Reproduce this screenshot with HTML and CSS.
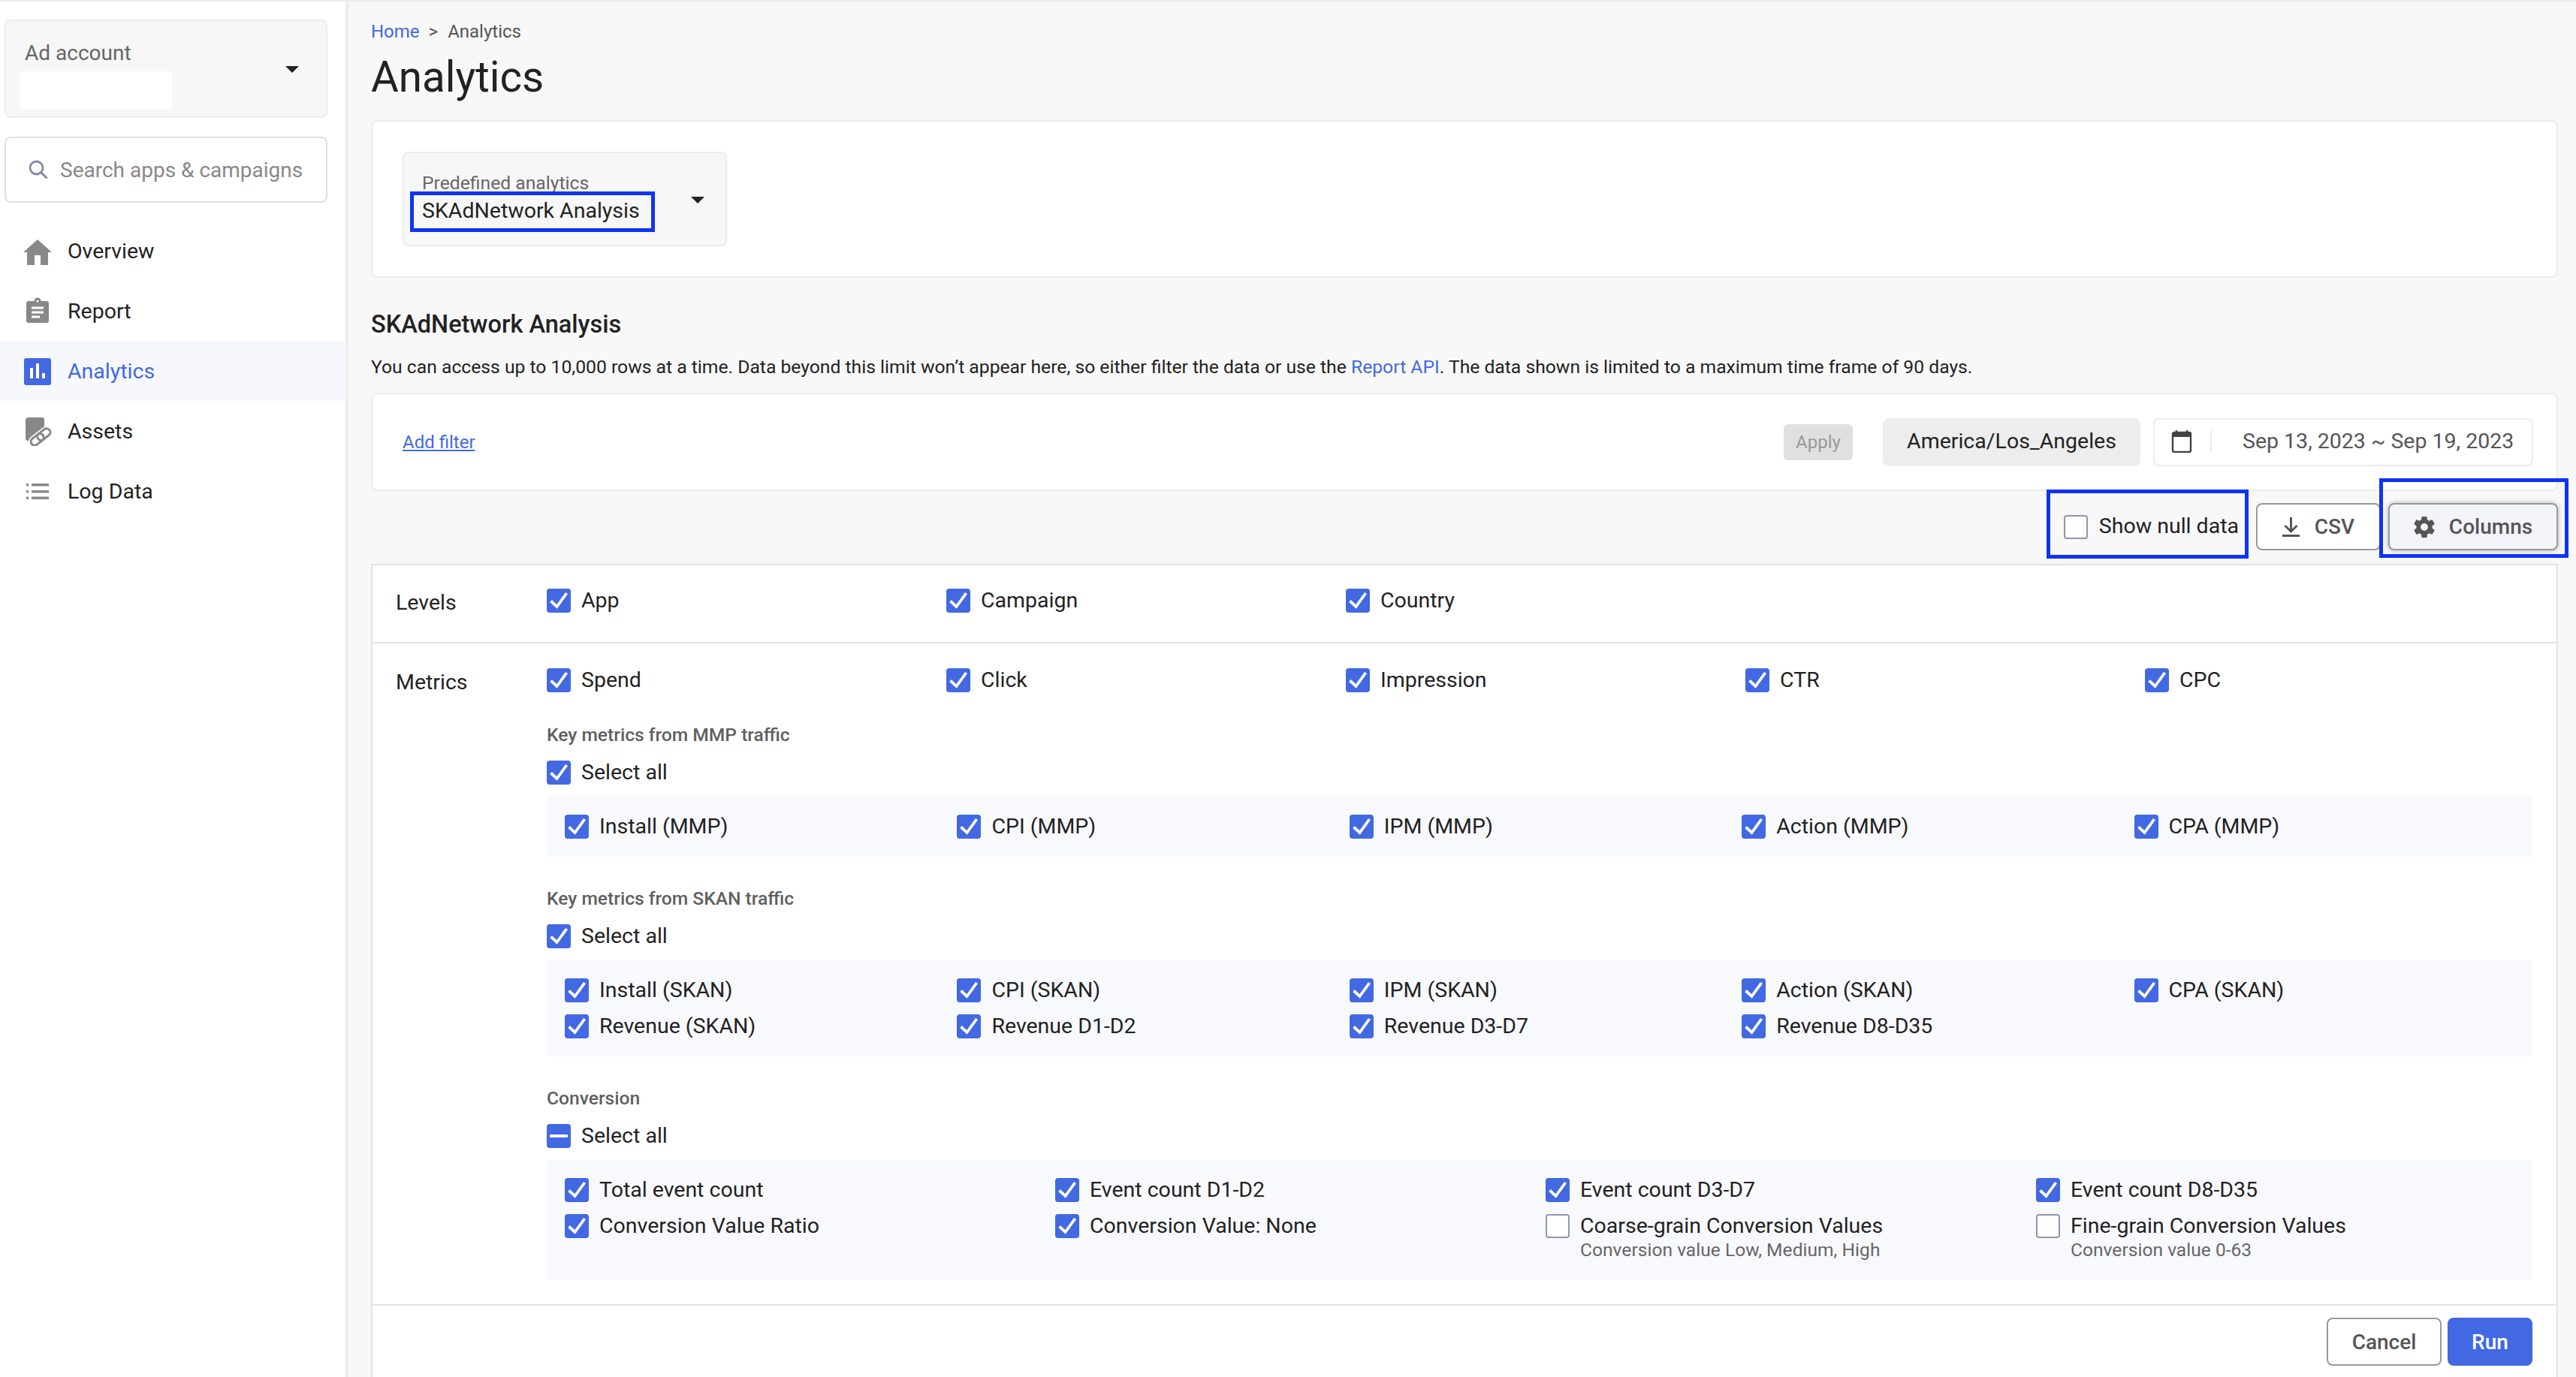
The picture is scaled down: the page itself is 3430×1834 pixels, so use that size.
FILE: index.html
```html
<!DOCTYPE html>
<html lang="en">
<head>
    <meta charset="UTF-8">
    <title>Analytics</title>
    <link rel="stylesheet" href="styles.css">
</head>
<body>
    <svg class="defs" width="0" height="0">
        <symbol id="tick" viewBox="0 0 32 32"><path d="M5.500 16.500L13.500 24L26.500 6" fill="none" stroke="#fff" stroke-width="3.800"/></symbol>
    </svg>
    <div class="page">
        <aside class="sidebar">
            <div class="account">
                <div class="account-text">
                    <div class="account-label">Ad account</div>
                    <div class="account-value"></div>
                </div>
                <span class="caret"></span>
            </div>
            <div class="search">
                <svg class="search-icon" viewBox="0 0 26 26"><circle cx="10.500" cy="10.500" r="8.500" fill="none" stroke="#7f8ba8" stroke-width="2.800"/><path d="M16.500 16.500l8 8" stroke="#7f8ba8" stroke-width="3"/></svg>
                <span>Search apps &amp; campaigns</span>
            </div>
            <nav class="menu">
                <a class="menu-item">
                    <svg class="menu-icon" viewBox="0 0 40 40"><path d="M20 5L1 22h5v17h10V26h8v13h10V22h5z" fill="#888"/></svg>
                    Overview
                </a>
                <a class="menu-item">
                    <svg class="menu-icon" viewBox="0 0 40 40"><rect x="5" y="7" width="30" height="29" rx="3" fill="#888"/><circle cx="20" cy="7" r="4.500" fill="#888"/><circle cx="20" cy="7" r="1.500" fill="#fff"/><path d="M12 16h16M12 22h16M12 28h11" stroke="#fff" stroke-width="3"/></svg>
                    Report
                </a>
                <a class="menu-item active">
                    <svg class="menu-icon" viewBox="0 0 40 40"><rect x="2" y="3" width="36" height="36" rx="3" fill="#4269e2"/><path d="M10 16h4v14h-4zM18 10h4v20h-4zM26 23h4v7h-4z" fill="#fff"/></svg>
                    Analytics
                </a>
                <a class="menu-item">
                    <svg class="menu-icon" viewBox="0 0 40 40">
                        <path d="M8 2h18a3 3 0 0 1 3 3v28H7a3 3 0 0 1-3-3V6a4 4 0 0 1 4-4z" fill="#888"/>
                        <g transform="rotate(-38 24 28)">
                            <rect x="6" y="20" width="36" height="16" rx="8" fill="#fff"/>
                            <rect x="9" y="23" width="19" height="10" rx="5" fill="none" stroke="#888" stroke-width="3"/>
                            <rect x="20" y="23" width="19" height="10" rx="5" fill="none" stroke="#888" stroke-width="3"/>
                        </g>
                    </svg>
                    Assets
                </a>
                <a class="menu-item">
                    <svg class="menu-icon" viewBox="0 0 40 40"><path d="M12 10h23v3.500H12zM12 19h23v3.500H12zM12 27.500h23V31H12zM5 10h3v3.500H5zM5 19h3v3.500H5zM5 27.500h3V31H5z" fill="#888"/></svg>
                    Log Data
                </a>
            </nav>
        </aside>

        <main class="main">
            <div class="breadcrumb"><a class="link">Home</a><span class="crumb-sep">&gt;</span>Analytics</div>
            <h1 class="title">Analytics</h1>

            <section class="card select-card">
                <div class="select">
                    <div class="select-label">Predefined analytics</div>
                    <div class="select-value">SKAdNetwork Analysis</div>
                    <span class="caret small"></span>
                    <span class="mark mark-select"></span>
                </div>
            </section>

            <h2 class="heading">SKAdNetwork Analysis</h2>
            <p class="note">You can access up to 10,000 rows at a time. Data beyond this limit won’t appear here, so either filter the data or use the <a class="link">Report API</a>. The data shown is limited to a maximum time frame of 90 days.</p>

            <section class="card filter-card">
                <a class="link add-filter">Add filter</a>
                <button class="apply">Apply</button>
                <div class="timezone">America/Los_Angeles</div>
                <div class="dates">
                    <svg class="calendar" viewBox="0 0 28 30"><path d="M7 0v4M21 0v4" stroke="#444" stroke-width="2.400"/><rect x="2" y="3" width="24" height="26" rx="2" fill="#fff" stroke="#444" stroke-width="2.400"/><rect x="2" y="3" width="24" height="6" fill="#444"/></svg>
                    <span class="dates-sep"></span>
                    <span>Sep 13, 2023 ~ Sep 19, 2023</span>
                </div>
            </section>

            <div class="toolbar">
                <label class="null-toggle"><span class="box"></span><span class="null-text">Show null data</span></label>
                <button class="tool-btn csv">
                    <svg class="csv-icon" viewBox="0 0 23 26"><path d="M11.500 0v18M3.500 11l8 8 8-8M0 24.500h23" fill="none" stroke="#555" stroke-width="3"/></svg>
                    CSV
                </button>
                <button class="tool-btn columns">
                    <svg class="gear-icon" viewBox="2 2 20 20"><path fill="#555" d="M19.430 12.980c.04-.32.07-.64.07-.98s-.03-.66-.07-.98l2.110-1.650c.19-.15.24-.42.12-.64l-2-3.460c-.12-.22-.39-.3-.61-.22l-2.490 1c-.52-.4-1.080-.73-1.690-.98l-.38-2.650C14.460 2.180 14.250 2 14 2h-4c-.25 0-.46.18-.49.42l-.38 2.650c-.61.25-1.170.59-1.690.98l-2.490-1c-.23-.09-.49 0-.61.22l-2 3.460c-.13.22-.07.49.12.64l2.110 1.650c-.04.32-.07.65-.07.98s.03.66.07.98l-2.110 1.650c-.19.15-.24.42-.12.64l2 3.460c.12.22.39.3.61.22l2.490-1c.52.4 1.080.73 1.690.98l.38 2.650c.03.24.24.42.49.42h4c.25 0 .46-.18.49-.42l.38-2.650c.61-.25 1.170-.59 1.690-.98l2.490 1c.23.09.49 0 .61-.22l2-3.460c.12-.22.07-.49-.12-.64l-2.110-1.650zM12 15.500c-1.930 0-3.500-1.570-3.500-3.500s1.570-3.500 3.500-3.500 3.500 1.570 3.500 3.500-1.570 3.500-3.500 3.500z"/></svg>
                    Columns
                </button>
                <span class="mark mark-null"></span>
                <span class="mark mark-columns"></span>
            </div>

            <section class="table">
                <div class="table-row levels">
                    <div class="row-label">Levels</div>
                    <div class="row-body top-grid">
                        <label class="opt"><span class="box on"><svg><use href="#tick"/></svg></span>App</label>
                        <label class="opt"><span class="box on"><svg><use href="#tick"/></svg></span>Campaign</label>
                        <label class="opt"><span class="box on"><svg><use href="#tick"/></svg></span>Country</label>
                    </div>
                </div>
                <div class="table-row metrics">
                    <div class="row-label">Metrics</div>
                    <div class="row-body">
                        <div class="top-grid">
                            <label class="opt"><span class="box on"><svg><use href="#tick"/></svg></span>Spend</label>
                            <label class="opt"><span class="box on"><svg><use href="#tick"/></svg></span>Click</label>
                            <label class="opt"><span class="box on"><svg><use href="#tick"/></svg></span>Impression</label>
                            <label class="opt"><span class="box on"><svg><use href="#tick"/></svg></span>CTR</label>
                            <label class="opt"><span class="box on"><svg><use href="#tick"/></svg></span>CPC</label>
                        </div>

                        <div class="group-title first">Key metrics from MMP traffic</div>
                        <label class="opt select-all"><span class="box on"><svg><use href="#tick"/></svg></span>Select all</label>
                        <div class="panel five">
                            <label class="opt"><span class="box on"><svg><use href="#tick"/></svg></span>Install (MMP)</label>
                            <label class="opt"><span class="box on"><svg><use href="#tick"/></svg></span>CPI (MMP)</label>
                            <label class="opt"><span class="box on"><svg><use href="#tick"/></svg></span>IPM (MMP)</label>
                            <label class="opt"><span class="box on"><svg><use href="#tick"/></svg></span>Action (MMP)</label>
                            <label class="opt"><span class="box on"><svg><use href="#tick"/></svg></span>CPA (MMP)</label>
                        </div>

                        <div class="group-title">Key metrics from SKAN traffic</div>
                        <label class="opt select-all"><span class="box on"><svg><use href="#tick"/></svg></span>Select all</label>
                        <div class="panel five">
                            <label class="opt"><span class="box on"><svg><use href="#tick"/></svg></span>Install (SKAN)</label>
                            <label class="opt"><span class="box on"><svg><use href="#tick"/></svg></span>CPI (SKAN)</label>
                            <label class="opt"><span class="box on"><svg><use href="#tick"/></svg></span>IPM (SKAN)</label>
                            <label class="opt"><span class="box on"><svg><use href="#tick"/></svg></span>Action (SKAN)</label>
                            <label class="opt"><span class="box on"><svg><use href="#tick"/></svg></span>CPA (SKAN)</label>
                            <label class="opt"><span class="box on"><svg><use href="#tick"/></svg></span>Revenue (SKAN)</label>
                            <label class="opt"><span class="box on"><svg><use href="#tick"/></svg></span>Revenue D1-D2</label>
                            <label class="opt"><span class="box on"><svg><use href="#tick"/></svg></span>Revenue D3-D7</label>
                            <label class="opt"><span class="box on"><svg><use href="#tick"/></svg></span>Revenue D8-D35</label>
                        </div>

                        <div class="group-title">Conversion</div>
                        <label class="opt select-all"><span class="box on dash"></span>Select all</label>
                        <div class="panel four">
                            <label class="opt"><span class="box on"><svg><use href="#tick"/></svg></span>Total event count</label>
                            <label class="opt"><span class="box on"><svg><use href="#tick"/></svg></span>Event count D1-D2</label>
                            <label class="opt"><span class="box on"><svg><use href="#tick"/></svg></span>Event count D3-D7</label>
                            <label class="opt"><span class="box on"><svg><use href="#tick"/></svg></span>Event count D8-D35</label>
                            <label class="opt"><span class="box on"><svg><use href="#tick"/></svg></span>Conversion Value Ratio</label>
                            <label class="opt"><span class="box on"><svg><use href="#tick"/></svg></span>Conversion Value: None</label>
                            <label class="opt"><span class="box"></span><span>Coarse-grain Conversion Values<small class="hint">Conversion value Low, Medium, High</small></span></label>
                            <label class="opt"><span class="box"></span><span>Fine-grain Conversion Values<small class="hint">Conversion value 0-63</small></span></label>
                        </div>
                    </div>
                </div>
                <div class="table-foot">
                    <button class="cancel">Cancel</button>
                    <button class="run">Run</button>
                </div>
            </section>
        </main>
    </div>
</body>
</html>
```

FILE: styles.css
```css
* {
    margin: 0;
    padding: 0;
    box-sizing: border-box;
}
html, body {
    height: 1834px;
    overflow: hidden;
}
body {
    font-family: "Roboto", "Liberation Sans", sans-serif;
    font-size: 28.5px;
    color: #222;
    background-color: #f8f8f8;
}
button {
    font-family: inherit;
}
.defs {
    position: absolute;
}
.page {
    display: flex;
    height: 1834px;
    border-top: 2px solid #ececec;
}
.link {
    color: #4269e2;
}

/* sidebar */
.sidebar {
    width: 464px;
    flex-shrink: 0;
    background-color: #fff;
    border-right: 4px solid #ededed;
    padding-top: 24px;
}
.account {
    display: flex;
    justify-content: space-between;
    align-items: center;
    width: 430px;
    height: 131px;
    margin-left: 6px;
    padding: 2px 36px 0 18px;
    background-color: #f7f7f7;
    border: 2px solid #ececec;
    border-radius: 8px;
}
.account-label {
    color: #666;
    font-size: 28px;
    margin: 14px 0 7px 7px;
    line-height: 34px;
}
.account-value {
    width: 203px;
    height: 51px;
    background-color: #fff;
}
.caret {
    border-left: 9px solid transparent;
    border-right: 9px solid transparent;
    border-top: 9px solid #222;
}
.search {
    display: flex;
    align-items: center;
    width: 430px;
    height: 88px;
    margin: 25px 0 24px 6px;
    padding-left: 30px;
    color: #888;
    font-size: 28px;
    border: 2px solid #dedede;
    border-radius: 8px;
}
.search-icon {
    width: 26px;
    height: 26px;
    margin-right: 16px;
}
.menu-item {
    display: flex;
    align-items: center;
    height: 80px;
    padding-left: 30px;
}
.menu-item.active {
    color: #4269e2;
    background-color: #f7f8fd;
}
.menu-icon {
    width: 40px;
    height: 40px;
    margin-right: 20px;
}

/* main column */
.main {
    flex: 1;
    padding: 0 24px 0 30px;
    min-width: 0;
}
.breadcrumb {
    font-size: 24px;
    line-height: 32px;
    color: #555;
    margin-top: 24px;
}
.crumb-sep {
    margin: 0 13px 0 12px;
}
.title {
    font-size: 56.500px;
    font-weight: 400;
    line-height: 72px;
    margin-top: 9px;
}
.card {
    background-color: #fff;
    border: 2px solid #ececec;
    border-radius: 8px;
}
.select-card {
    height: 210px;
    margin-top: 21px;
    padding: 40px 0 0 40px;
}
.select {
    position: relative;
    width: 432px;
    height: 126px;
    padding: 25px 0 0 24px;
    background-color: #f7f7f7;
    border: 2px solid #ececec;
    border-radius: 8px;
}
.select-label {
    font-size: 24.700px;
    line-height: 30px;
    color: #666;
}
.select-value {
    line-height: 36px;
    margin-top: 4px;
}
.caret.small {
    position: absolute;
    right: 28px;
    top: 58px;
}
.mark {
    position: absolute;
    border: 5px solid #0f33f5;
}
.mark-select {
    left: 8px;
    top: 51px;
    width: 326px;
    height: 54px;
}
.heading {
    font-size: 32.500px;
    font-weight: 500;
    line-height: 40px;
    margin-top: 42px;
}
.note {
    font-size: 24.700px;
    line-height: 32px;
    margin-top: 21px;
}
.filter-card {
    display: flex;
    align-items: center;
    height: 131px;
    margin-top: 18px;
    padding: 0 31px 0 40px;
}
.add-filter {
    font-size: 24px;
    text-decoration: underline;
    margin-right: auto;
}
.apply {
    width: 92px;
    height: 48px;
    margin-right: 40px;
    font-size: 24px;
    color: #999;
    background-color: #e0e0e0;
    border: none;
    border-radius: 6px;
}
.timezone {
    display: flex;
    align-items: center;
    justify-content: center;
    width: 343px;
    height: 64px;
    padding-bottom: 2px;
    background-color: #ededed;
    border-radius: 8px;
}
.dates {
    display: flex;
    align-items: center;
    width: 506px;
    height: 64px;
    margin-left: 17px;
    padding: 0 0 2px 22px;
    color: #555;
    border: 2px solid #ececec;
    border-radius: 8px;
}
.calendar {
    width: 28px;
    height: 30px;
}
.dates-sep {
    width: 2px;
    height: 30px;
    margin: 0 41px 0 24px;
    background-color: #ececec;
}
.toolbar {
    position: relative;
    display: flex;
    justify-content: flex-end;
    align-items: center;
    height: 97px;
    padding-bottom: 2px;
}
.null-toggle {
    display: flex;
    align-items: center;
    margin-right: 23px;
}
.null-toggle .box {
    margin-right: 15px;
}
.null-text {
    padding-bottom: 3px;
}
.tool-btn {
    display: flex;
    align-items: center;
    justify-content: center;
    height: 63px;
    font-size: 28px;
    font-weight: 500;
    color: #555;
    background-color: #fff;
    border: 2px solid #999;
    border-radius: 8px;
}
.csv-icon {
    width: 23px;
    height: 26px;
    margin-right: 20px;
}
.gear-icon {
    width: 28px;
    height: 28px;
    margin-right: 19px;
}
.csv {
    width: 166px;
    margin-right: 10px;
}
.columns {
    width: 226px;
    background-color: #f2f4f9;
    box-shadow: 0 0 6px rgba(0, 0, 0, 0.3);
}
.mark-null {
    left: 2231px;
    top: -2px;
    width: 269px;
    height: 92px;
}
.mark-columns {
    left: 2674px;
    top: -17px;
    width: 252px;
    height: 106px;
}

/* columns table */
.table {
    background-color: #fff;
    border: 2px solid #e2e2e2;
    border-bottom: none;
}
.table-row {
    display: flex;
    border-bottom: 2px solid #e2e2e2;
}
.levels {
    height: 104px;
    padding-top: 31px;
}
.metrics {
    height: 882px;
    padding-top: 33px;
}
.row-label {
    width: 232px;
    flex-shrink: 0;
    padding: 1px 0 0 31px;
    line-height: 36px;
}
.row-body {
    flex: 1;
    min-width: 0;
    padding-right: 32px;
}
.top-grid {
    display: grid;
    grid-template-columns: repeat(5, 532px);
}
.opt {
    display: flex;
    align-items: flex-start;
    line-height: 32px;
}
.box {
    display: block;
    width: 32px;
    height: 32px;
    flex-shrink: 0;
    margin-right: 14px;
    background-color: #fff;
    border: 2px solid #8d97b0;
    border-radius: 4px;
}
.box.on {
    background-color: #4269e2;
    border: none;
}
.box svg {
    display: block;
    width: 32px;
    height: 32px;
}
.box.dash {
    position: relative;
}
.box.dash::after {
    content: "";
    position: absolute;
    left: 4px;
    right: 4px;
    top: 14px;
    height: 4px;
    background-color: #fff;
}
.group-title {
    font-size: 24.600px;
    font-weight: 500;
    line-height: 28px;
    color: #5f5f5f;
    margin-top: 42px;
}
.group-title.first {
    margin-top: 43px;
}
.select-all {
    margin-top: 20px;
}
.panel {
    display: grid;
    row-gap: 16px;
    margin-top: 16px;
    padding: 24px 0 24px 24px;
    background-color: #f8f9fd;
}
.five {
    grid-template-columns: repeat(5, 522.400px);
}
.four {
    grid-template-columns: repeat(4, 653px);
    padding-bottom: 26px;
}
.hint {
    display: block;
    font-size: 24.600px;
    line-height: 28px;
    color: #666;
    margin-top: 2px;
}
.table-foot {
    display: flex;
    justify-content: flex-end;
    gap: 8px;
    padding: 16px 32px 0 0;
    height: 100px;
}
.cancel, .run {
    height: 64px;
    font-size: 28px;
    font-weight: 500;
    border-radius: 8px;
}
.cancel {
    width: 153px;
    color: #555;
    background-color: #fff;
    border: 2px solid #999;
}
.run {
    width: 113px;
    color: #fff;
    background-color: #4269e2;
    border: none;
}
```
